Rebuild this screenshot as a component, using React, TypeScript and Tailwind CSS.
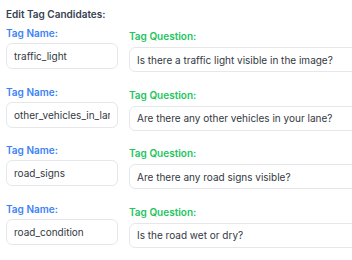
const ROWS = [
  { name: "traffic_light", question: "Is there a traffic light visible in the image?" },
  { name: "other_vehicles_in_lane", question: "Are there any other vehicles in your lane?" },
  { name: "road_signs", question: "Are there any road signs visible?" },
  { name: "road_condition", question: "Is the road wet or dry?" },
];

export default function App() {
  return (
    <div
      className="w-[352px] h-[260px] overflow-hidden bg-white px-[6px] pt-[7px]"
      style={{ fontFamily: "Inter, 'Noto Sans', sans-serif" }}
    >
      <h3 className="text-[10px] leading-[14px] font-semibold text-[#374151]">Edit Tag Candidates:</h3>
      <div className="mt-[5px] flex flex-col gap-[12.5px]">
        {ROWS.map((r) => (
          <div key={r.name} className="flex gap-[11px]">
            <div className="w-[112px] shrink-0">
              <div className="text-[10px] leading-[14px] font-semibold text-[#3b82f6]">Tag Name:</div>
              <input
                readOnly
                value={r.name}
                className="mt-[3px] h-[26px] w-full rounded-md border border-[#e5e7eb] px-[7px] text-[10px] text-[#333842] outline-none"
              />
            </div>
            <div className="w-[260px] shrink-0 pt-[3px]">
              <div className="text-[10px] leading-[14px] font-semibold text-[#22c55e]">Tag Question:</div>
              <input
                readOnly
                value={r.question}
                className="mt-[4px] h-[25px] w-full rounded-md border border-[#e5e7eb] px-[7px] text-[10px] text-[#333842] outline-none"
              />
            </div>
          </div>
        ))}
      </div>
    </div>
  );
}
